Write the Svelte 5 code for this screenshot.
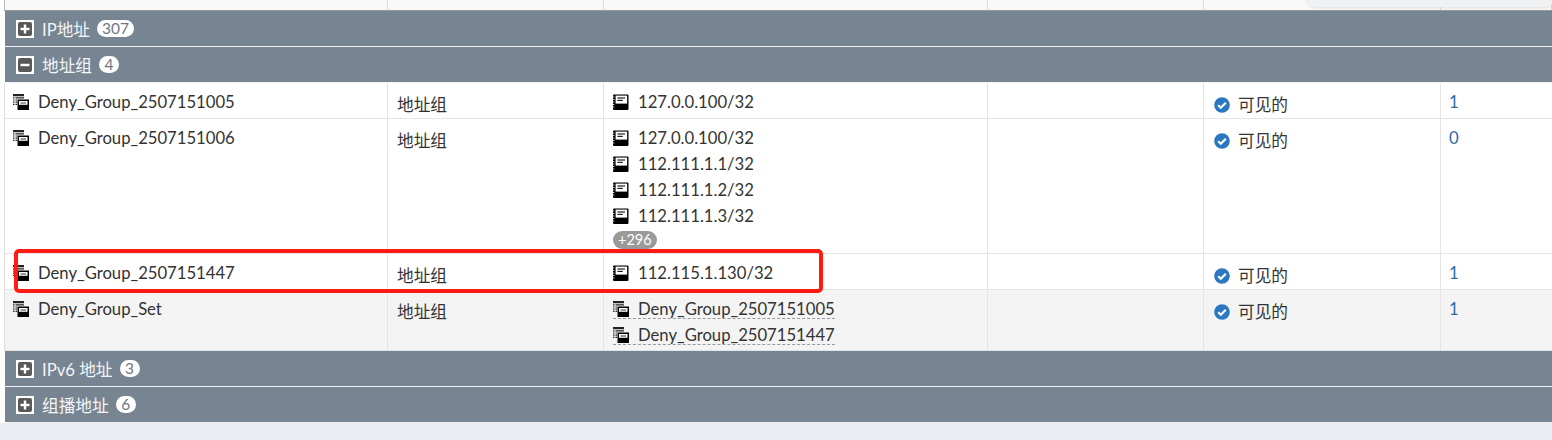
<script>
  const names = [
    { name: 'Deny_Group_2507151005', count: 1, members: [['a', '127.0.0.100/32']] },
    { name: 'Deny_Group_2507151006', count: 0, members: [['a', '127.0.0.100/32'], ['a', '112.111.1.1/32'], ['a', '112.111.1.2/32'], ['a', '112.111.1.3/32']], more: '+296' },
    { name: 'Deny_Group_2507151447', count: 1, members: [['a', '112.115.1.130/32']] },
    { name: 'Deny_Group_Set', count: 1, shade: true, members: [['g', 'Deny_Group_2507151005'], ['g', 'Deny_Group_2507151447']] }
  ];
</script>

{#snippet groupIcon()}
  <svg class="ico" width="16" height="16" viewBox="0 0 16 16">
    <path d="M0 0h11v2.200H0zM0 3.200h1.500v1.200H0zM0 5.400h1.500v1.200H0zM0 7.600h1.500v1.200H0zM0 9.800h1.500v1.200H0zM2.500 3.200h8.500v1.200H2.500zM2.500 5.400h1.500v1.200H2.500zM2.500 7.600h1.500v1.200H2.500zM2.500 9.800h1.500v1.200H2.500z" fill="#222"/>
    <rect x="4.500" y="5.500" width="11.500" height="10.500" fill="#000"/>
    <rect x="6" y="7" width="8.500" height="3.800" fill="#fff"/>
    <rect x="7.500" y="8.500" width="5.500" height="1" fill="#333"/>
  </svg>
{/snippet}

{#snippet addrIcon()}
  <svg class="ico" width="16" height="16" viewBox="0 0 16 16">
    <rect x="0" y="0.500" width="15.500" height="15.500" rx="1" fill="#000"/>
    <rect x="2.600" y="1.600" width="11.500" height="8" fill="#fff"/>
    <rect x="4.400" y="3.400" width="7.600" height="1.200" fill="#222"/>
    <rect x="4.400" y="5.800" width="5.400" height="1.200" fill="#222"/>
    <path d="M0 3h1.400M0 5.500h1.400M0 8h1.400M0 10.500h1.400M0 13h1.400" stroke="#fff" stroke-width=".8"/>
  </svg>
{/snippet}

{#snippet toggle(open)}
  <span class="toggle">
    <span class="inner">
      <svg width="12" height="12" viewBox="0 0 12 12">
        <rect x="1.500" y="4.800" width="9" height="2.400" fill="#fff"/>
        {#if !open}<rect x="4.800" y="1.500" width="2.400" height="9" fill="#fff"/>{/if}
      </svg>
    </span>
  </span>
{/snippet}

{#snippet band(label, n, open)}
  <div class="band">
    {@render toggle(open)}
    <span class="label">{label}</span>
    <span class="pill">{n}</span>
  </div>
{/snippet}

<div class="page">
  <div class="table">
    <div class="head">
      <span class="hc c1"></span><span class="hc c2"></span><span class="hc c3"></span><span class="hc c4"></span><span class="hc c5"></span><span class="hc c6"></span>
      <div class="float"></div>
    </div>
    {@render band('IP地址', 307, false)}
    {@render band('地址组', 4, true)}
    {#each names as r}
      <div class="row" class:shade={r.shade}>
        <div class="cell c1"><span class="line">{@render groupIcon()}<span>{r.name}</span></span></div>
        <div class="cell c2"><span class="cjk">地址组</span></div>
        <div class="cell c3">
          {#each r.members as m}
            {#if m[0] === 'a'}
              <span class="line">{@render addrIcon()}<span>{m[1]}</span></span>
            {:else}
              <span class="line dashed">{@render groupIcon()}<span>{m[1]}</span></span>
            {/if}
          {/each}
          {#if r.more}<span class="more">{r.more}</span>{/if}
        </div>
        <div class="cell c4"></div>
        <div class="cell c5">
          <span class="vis">
            <svg width="16" height="16" viewBox="0 0 16 16">
              <circle cx="8" cy="8" r="7.800" fill="#2a78bf"/>
              <path d="M4.200 8.300l2.600 2.500 5-5" fill="none" stroke="#fff" stroke-width="2.200"/>
            </svg>
            <span class="cjk plain">可见的</span>
          </span>
        </div>
        <div class="cell c6"><span class="count">{r.count}</span></div>
      </div>
    {/each}
    {@render band('IPv6 地址', 3, false)}
    {@render band('组播地址', 6, false)}
  </div>
  <div class="redbox"></div>
</div>

<style>
  :global(body) {
    margin: 0;
    background: #e9ecf1;
  }
  .page {
    position: relative;
    width: 1552px;
    height: 440px;
    overflow: hidden;
    box-sizing: border-box;
    font-family: Lato, "Noto Sans CJK SC", sans-serif;
    font-size: 16.670px;
    color: #333;
  }
  .table {
    background: #fff;
  }
  .head {
    position: relative;
    display: flex;
    height: 10px;
    margin-left: 4px;
    background: #f8f8f8;
    border-left: 1px solid #bbb;
    border-bottom: 1px solid #999;
  }
  .hc {
    box-sizing: border-box;
    border-right: 1px solid #ddd;
  }
  .float {
    position: absolute;
    right: -1px;
    top: -7px;
    width: 245px;
    height: 14px;
    background: #f0f1f3;
    border-radius: 8px;
    box-shadow: 0 0 4px rgba(0, 0, 0, .15);
  }
  .c1 { width: 383px; }
  .c2 { width: 216px; }
  .c3 { width: 384px; }
  .c4 { width: 216px; }
  .c5 { width: 237px; }
  .c6 { flex: 1; }
  .band {
    display: flex;
    align-items: center;
    height: 35px;
    margin-left: 5px;
    padding-left: 11px;
    background: #778593;
    border-bottom: 1px solid #f2f3f5;
    color: #fff;
  }
  .toggle {
    display: flex;
    align-items: center;
    justify-content: center;
    width: 18px;
    height: 18px;
    background: #fff;
    margin-right: 8px;
  }
  .inner {
    display: flex;
    align-items: center;
    justify-content: center;
    width: 14px;
    height: 14px;
    background: #58595b;
    border-radius: 2px;
  }
  .label { color: #f4f5f6; }
  .pill {
    display: inline-block;
    margin-left: 7px;
    min-width: 20px;
    box-sizing: border-box;
    padding: 0 5px;
    height: 17px;
    line-height: 17px;
    border-radius: 9px;
    background: #fff;
    color: #6d7883;
    font-size: 15.500px;
    text-align: center;
  }
  .row {
    display: flex;
    margin-left: 4px;
    border-left: 1px solid #ddd;
    border-bottom: 1px solid #e4e4e4;
    background: #fff;
  }
  .row.shade { background: #f4f4f4; }
  .cell {
    box-sizing: border-box;
    padding: 6px 0 3px 9px;
    border-right: 1px solid #e4e4e4;
    display: flex;
    flex-direction: column;
    align-items: flex-start;
  }
  .cell.c1 { padding-left: 8px; }
  .cell.c6 { border-right: 0; padding-left: 8px; }
  .line {
    display: inline-flex;
    align-items: center;
    gap: 9px;
    height: 26px;
    line-height: 26px;
    white-space: nowrap;
  }
  .dashed {
    box-sizing: border-box;
    height: 23px;
    padding-top: 3px;
    border-bottom: 1px dashed #999;
    margin-bottom: 3px;
  }
  .dashed:last-of-type { margin-bottom: 2px; }
  .ico { flex: none; }
  .cjk { line-height: 19px; margin-top: 7px; }
  .cjk.plain { margin-top: 2px; }
  .more {
    margin-top: 2px;
    height: 18px;
    line-height: 18px;
    padding: 0 5px;
    border-radius: 9px;
    background: #9a9a9a;
    color: #fff;
    font-size: 14.500px;
    margin-bottom: 1px;
  }
  .vis {
    display: inline-flex;
    align-items: center;
    gap: 8px;
    padding-left: 1px;
    margin-top: 6px;
    height: 19px;
  }
  .count {
    color: #2b6ca3;
    line-height: 26px;
  }
  .redbox {
    position: absolute;
    left: 14px;
    top: 249px;
    width: 809px;
    height: 44px;
    box-sizing: border-box;
    border: 4px solid #ff1a12;
    border-radius: 5px;
  }
</style>
